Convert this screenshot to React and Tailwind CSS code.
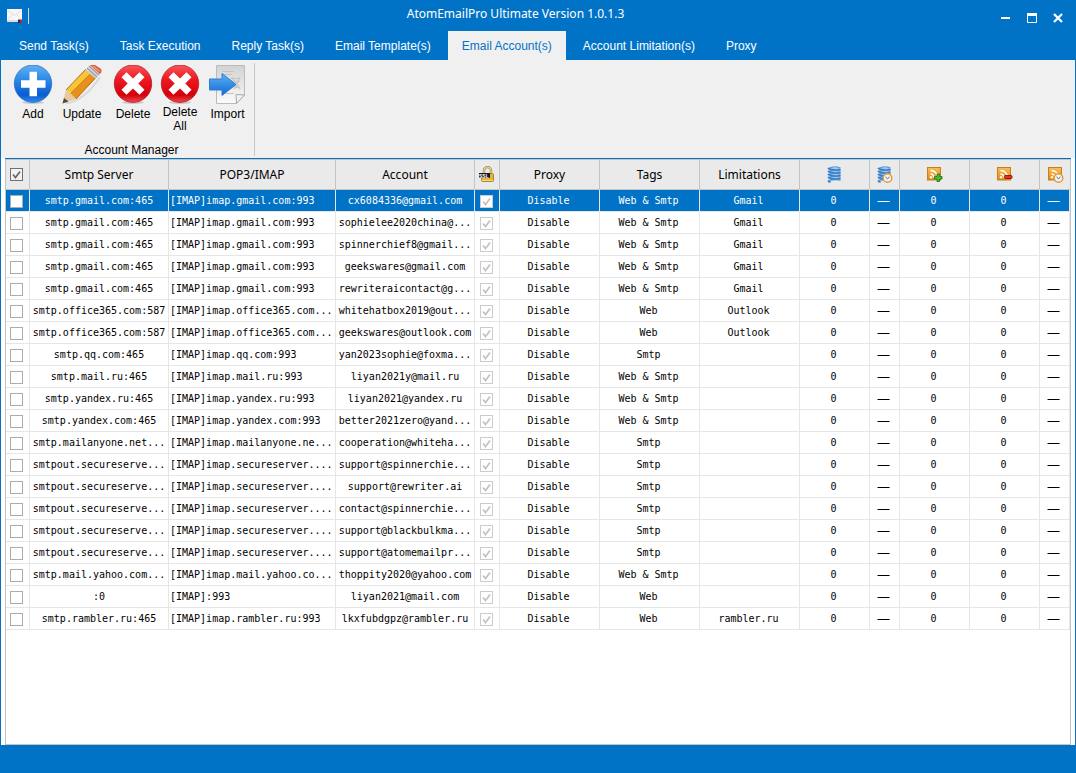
import React, { useState } from "react";

const tabs = [
  "Send Task(s)",
  "Task Execution",
  "Reply Task(s)",
  "Email Template(s)",
  "Email Account(s)",
  "Account Limitation(s)",
  "Proxy",
];

const accounts = [
  ["smtp.gmail.com:465", "[IMAP]imap.gmail.com:993", "cx6084336@gmail.com", "Web & Smtp", "Gmail"],
  ["smtp.gmail.com:465", "[IMAP]imap.gmail.com:993", "sophielee2020china@...", "Web & Smtp", "Gmail"],
  ["smtp.gmail.com:465", "[IMAP]imap.gmail.com:993", "spinnerchief8@gmail...", "Web & Smtp", "Gmail"],
  ["smtp.gmail.com:465", "[IMAP]imap.gmail.com:993", "geekswares@gmail.com", "Web & Smtp", "Gmail"],
  ["smtp.gmail.com:465", "[IMAP]imap.gmail.com:993", "rewriteraicontact@g...", "Web & Smtp", "Gmail"],
  ["smtp.office365.com:587", "[IMAP]imap.office365.com...", "whitehatbox2019@out...", "Web", "Outlook"],
  ["smtp.office365.com:587", "[IMAP]imap.office365.com...", "geekswares@outlook.com", "Web", "Outlook"],
  ["smtp.qq.com:465", "[IMAP]imap.qq.com:993", "yan2023sophie@foxma...", "Smtp", ""],
  ["smtp.mail.ru:465", "[IMAP]imap.mail.ru:993", "liyan2021y@mail.ru", "Web & Smtp", ""],
  ["smtp.yandex.ru:465", "[IMAP]imap.yandex.ru:993", "liyan2021@yandex.ru", "Web & Smtp", ""],
  ["smtp.yandex.com:465", "[IMAP]imap.yandex.com:993", "better2021zero@yand...", "Web & Smtp", ""],
  ["smtp.mailanyone.net...", "[IMAP]imap.mailanyone.ne...", "cooperation@whiteha...", "Smtp", ""],
  ["smtpout.secureserve...", "[IMAP]imap.secureserver....", "support@spinnerchie...", "Smtp", ""],
  ["smtpout.secureserve...", "[IMAP]imap.secureserver....", "support@rewriter.ai", "Smtp", ""],
  ["smtpout.secureserve...", "[IMAP]imap.secureserver....", "contact@spinnerchie...", "Smtp", ""],
  ["smtpout.secureserve...", "[IMAP]imap.secureserver....", "support@blackbulkma...", "Smtp", ""],
  ["smtpout.secureserve...", "[IMAP]imap.secureserver....", "support@atomemailpr...", "Smtp", ""],
  ["smtp.mail.yahoo.com...", "[IMAP]imap.mail.yahoo.co...", "thoppity2020@yahoo.com", "Web & Smtp", ""],
  [":0", "[IMAP]:993", "liyan2021@mail.com", "Web", ""],
  ["smtp.rambler.ru:465", "[IMAP]imap.rambler.ru:993", "lkxfubdgpz@rambler.ru", "Web", "rambler.ru"],
];

const MailIcon = () => (
  <svg width="16" height="16" viewBox="0 0 16 16">
    <rect x="0" y="1" width="15" height="13" fill="#f7f7f7" />
    <rect x="0" y="12" width="15" height="2" fill="#dcdcdc" />
    <path d="M1 2.5 L7.5 7.5 L14 2.5 M1 11 L5.5 6.5 M14 11 L9.5 6.5" fill="none" stroke="#dedede" />
    <rect x="11" y="11.5" width="2" height="3.5" fill="#2a2d50" />
    <rect x="13" y="11.5" width="2" height="3.5" fill="#c22338" />
  </svg>
);

const AddIcon = () => (
  <svg width="40" height="40" viewBox="0 0 40 40">
    <defs>
      <linearGradient id="blueBall" x1="0" y1="0" x2="0" y2="1">
        <stop offset="0" stopColor="#62b0f4" />
        <stop offset="0.45" stopColor="#2484e6" />
        <stop offset="0.8" stopColor="#0b5bd0" />
        <stop offset="1" stopColor="#2f8cf0" />
      </linearGradient>
    </defs>
    <ellipse cx="20" cy="37.5" rx="11" ry="1.5" fill="#c4c8cc" />
    <circle cx="20" cy="18.7" r="18.7" fill="url(#blueBall)" stroke="#2a6fc4" strokeWidth="0.8" />
    <path d="M16.5 6.7h7.5v8.5h8.5v7.5h-8.5v8.5h-7.5v-8.5h-8.5v-7.5h8.5z" fill="#fff" />
  </svg>
);

const PencilIcon = () => (
  <svg width="40" height="40" viewBox="0 0 40 40">
    <path d="M4 38.5 Q22 36 38 12" fill="none" stroke="#d8d8d8" strokeWidth="2" />
    <path d="M4 25 L14 34 L0.5 38.5z" fill="#e8c99a" />
    <path d="M2 33 L6.5 36.5 L0.5 38.5z" fill="#4a4a4a" />
    <path d="M4 25 L24 4 L29 8 L8.5 28.5z" fill="#f7c43c" />
    <path d="M8.5 28.5 L29 8 L34 12.5 L14 34z" fill="#e8901c" />
    <path d="M4 25 L24 4 M14 34 L34 12.5" stroke="#b86f12" fill="none" />
    <path d="M8.5 28.5 L29 8" stroke="#d88612" fill="none" />
    <path d="M23 5 L28 0 L38 9 L33.5 13.5z" fill="#cfcfcf" />
    <path d="M25 3 L35 12 M27 1 L37 10" stroke="#8c8c8c" fill="none" />
    <path d="M28 0 L33 0 L39 4 Q40.5 7 38 9z" fill="#e0563a" />
    <path d="M31 1 L38 6.5" stroke="#f29a80" strokeWidth="1.5" fill="none" />
  </svg>
);

const DeleteIcon = () => (
  <svg width="40" height="40" viewBox="0 0 40 40">
    <defs>
      <linearGradient id="redBall" x1="0" y1="0" x2="0" y2="1">
        <stop offset="0" stopColor="#f7585c" />
        <stop offset="0.35" stopColor="#ee1c24" />
        <stop offset="0.8" stopColor="#d4000c" />
        <stop offset="1" stopColor="#f04a4e" />
      </linearGradient>
    </defs>
    <ellipse cx="20" cy="37.5" rx="11" ry="1.5" fill="#ccc4c4" />
    <circle cx="20" cy="18.7" r="18.7" fill="url(#redBall)" stroke="#b81a20" strokeWidth="0.8" />
    <path
      d="M13.5 7.2l6.5 6.2 6.5-6.2 5 5-6.2 6.3 6.2 6.3-5 5-6.5-6.2-6.5 6.2-5-5 6.2-6.3-6.2-6.3z"
      fill="#fff"
    />
  </svg>
);

const ImportIcon = () => (
  <svg width="40" height="40" viewBox="0 0 40 40">
    <defs>
      <linearGradient id="paper" x1="0" y1="0" x2="0" y2="1">
        <stop offset="0" stopColor="#d2d2d2" />
        <stop offset="1" stopColor="#fbfbfb" />
      </linearGradient>
      <linearGradient id="arrow" x1="0" y1="0" x2="0" y2="1">
        <stop offset="0" stopColor="#5eb3f7" />
        <stop offset="1" stopColor="#1268d0" />
      </linearGradient>
    </defs>
    <path d="M8.5 0.5h28v29.5l-8 8.5h-20z" fill="url(#paper)" stroke="#b9bcbe" />
    <path d="M36.5 30l-8.5-0.5 0.5 9z" fill="#f2f2f2" stroke="#a8a8a8" />
    <path d="M14 6.5h12M14 9.5h10M22 13.5h10M25 16.5h7M26 22.5h6M15 28.5h11" stroke="#c4c4c4" fill="none" />
    <path d="M24 12l8 12M32 12l-6 12" stroke="#cacaca" strokeWidth="2" fill="none" />
    <path d="M1.5 14h12.5V8.5L28 19.5 14 30.5V25H1.5z" fill="url(#arrow)" stroke="#2b7fd4" />
  </svg>
);

const LockIcon = () => (
  <svg width="16" height="17" viewBox="0 0 16 17">
    <path d="M5 8V4.5a3.5 3.5 0 0 1 7 0V8" fill="none" stroke="#a8904e" strokeWidth="2.4" />
    <path d="M5 8V4.5a3.5 3.5 0 0 1 7 0V8" fill="none" stroke="#ecdca4" strokeWidth="1" />
    <rect x="2.5" y="7.5" width="12" height="8" rx="1" fill="#e3b53c" stroke="#b08424" />
    <path d="M3 14.5h11" stroke="#f5dc88" />
    <rect x="0" y="7" width="11" height="5" fill="#111827" />
    <text x="0" y="12" fontSize="5" fontWeight="bold" fill="#fff" fontFamily="Liberation Sans, sans-serif">
      SSL
    </text>
  </svg>
);

const Clock = () => (
  <g>
    <circle cx="11.5" cy="12" r="4.3" fill="#eef3fa" stroke="#e59a2c" strokeWidth="1.4" />
    <path d="M9.5 11l2 1.7 2-1.7" fill="none" stroke="#56627a" />
  </g>
);

const CoilIcon = ({ clock }) => (
  <svg width="17" height="17" viewBox="0 0 17 17">
    <path d="M3 2h10.5v12L4 15.5z" fill="#a4c9ee" />
    <path
      d="M2.5 2.5Q8 -0.5 14 2M2.5 5.5Q8 3.5 14 5M2.5 8.5Q8 6.5 14 8M2.5 11.5Q8 9.5 14 11M2.5 14.5Q8 12.5 14 14"
      fill="none"
      stroke="#5a9bdc"
      strokeWidth="1.4"
      strokeLinecap="round"
    />
    <path
      d="M2.5 2.5Q7 5 14 3.5M2.5 5.5Q7 8 14 6.5M2.5 8.5Q7 11 14 9.5M2.5 11.5Q7 14 14 12.5M2.5 15.5L4 16"
      fill="none"
      stroke="#3a7fc6"
      strokeWidth="1.6"
      strokeLinecap="round"
    />
    {clock && <Clock />}
  </svg>
);

const FeedIcon = ({ badge }) => (
  <svg width="17" height="17" viewBox="0 0 17 17">
    <defs>
      <linearGradient id="feed" x1="0" y1="0" x2="0" y2="1">
        <stop offset="0" stopColor="#f6bf5c" />
        <stop offset="1" stopColor="#e08a14" />
      </linearGradient>
    </defs>
    <rect x="1.5" y="1.5" width="13" height="12.5" fill="url(#feed)" stroke="#c9801c" />
    <path d="M4.5 4.5a7 7 0 0 1 7 7M4.5 8a3.5 3.5 0 0 1 3.5 3.5" fill="none" stroke="#fff" strokeWidth="1.6" />
    <circle cx="5" cy="11.3" r="1.2" fill="#fff" />
    {badge === "plus" && (
      <path d="M11 8h2.5v2.5h2.5v2.5h-2.5v2.5h-2.5v-2.5h-2.5v-2.5h2.5z" fill="#4cb83a" stroke="#26861d" />
    )}
    {badge === "minus" && <rect x="8.5" y="9.5" width="7.5" height="3" rx="1" fill="#dc3424" stroke="#9c140c" />}
    {badge === "clock" && <Clock />}
  </svg>
);

const Tick = ({ className }) => (
  <svg width="13" height="13" viewBox="0 0 13 13" className={`pointer-events-none [grid-area:1/1] ${className}`}>
    <path d="M3 6.5l2.5 3 4.5-6" fill="none" stroke="currentColor" strokeWidth="1.8" />
  </svg>
);

const CheckBox = ({ label, className, tickClass, ...props }) => (
  <label className="grid place-items-center">
    <input
      type="checkbox"
      aria-label={label}
      className={`peer size-[13px] appearance-none border [grid-area:1/1] ${className}`}
      {...props}
    />
    <Tick className={`hidden peer-checked:block ${tickClass}`} />
  </label>
);

const tools = [
  { name: "Add", icon: <AddIcon />, width: "w-12" },
  { name: "Update", icon: <PencilIcon />, width: "w-[50px]" },
  { name: "Delete", icon: <DeleteIcon />, width: "w-[52px]" },
  { name: "Delete All", icon: <DeleteIcon />, width: "w-[42px]", wrap: true },
  { name: "Import", icon: <ImportIcon />, width: "w-[53px]" },
];

const columns = [
  { name: "Smtp Server", width: "w-[139px]" },
  { name: "POP3/IMAP", width: "w-[167px]" },
  { name: "Account", width: "w-[139px]" },
  { name: "SSL", width: "w-[25px]", icon: <LockIcon /> },
  { name: "Proxy", width: "w-[100px]" },
  { name: "Tags", width: "w-[100px]" },
  { name: "Limitations", width: "w-[100px]" },
  { name: "Total", width: "w-[70px]", icon: <CoilIcon /> },
  { name: "Total time", width: "w-[30px]", icon: <CoilIcon clock /> },
  { name: "Success", width: "w-[70px]", icon: <FeedIcon badge="plus" /> },
  { name: "Failed", width: "w-[70px]", icon: <FeedIcon badge="minus" /> },
  { name: "Last time", width: "w-[30px]", icon: <FeedIcon badge="clock" /> },
];

const Dash = () => <span className="block font-['Liberation_Sans',sans-serif] text-xs leading-4">—</span>;

const App = () => {
  const [tab, setTab] = useState("Email Account(s)");
  const [selected, setSelected] = useState(0);

  return (
    <div className="flex min-h-screen flex-col bg-[#0173c7] font-['Liberation_Sans',Arial,sans-serif] text-xs text-black">
      <header className="flex h-[31px] items-center text-white">
        <div className="flex w-[30px] items-center gap-[5px] pl-[7px]">
          <MailIcon />
          <span className="h-4 w-px shrink-0 bg-[#c8d8e8]" />
        </div>
        <h1 className="flex-1 pb-1 text-center font-['Noto_Sans',sans-serif] text-xs">
          AtomEmailPro Ultimate Version 1.0.1.3
        </h1>
        <div className="flex w-[75px] items-center gap-4 pt-1">
          <button aria-label="Minimize">
            <svg width="10" height="10" viewBox="0 0 10 10">
              <rect y="4" width="9" height="2" fill="#fff" />
            </svg>
          </button>
          <button aria-label="Maximize">
            <svg width="10" height="10" viewBox="0 0 10 10">
              <path d="M0.5 0.5h9v9h-9z" fill="none" stroke="#fff" />
              <rect width="10" height="3" fill="#fff" />
            </svg>
          </button>
          <button aria-label="Close">
            <svg width="10" height="10" viewBox="0 0 10 10">
              <path d="M1 1l8 8M9 1l-8 8" stroke="#fff" strokeWidth="2.2" />
            </svg>
          </button>
        </div>
      </header>

      <nav className="flex h-[29px] gap-[3px] pl-[5px]">
        {tabs.map((t) => (
          <button
            key={t}
            onClick={() => setTab(t)}
            className={`px-[14px] whitespace-nowrap ${t === tab ? "bg-[#f0f0f0] text-[#0173c7]" : "text-white"}`}
          >
            {t}
          </button>
        ))}
      </nav>

      <main className="mx-px flex flex-1 flex-col bg-white">
        <section className="flex h-[98px] bg-[#f0f0f0] pb-[2px] pt-[3px]">
          <div className="flex flex-col border-r border-[#c8c8c8] pl-2 pt-[2px]">
            <div className="flex flex-1 items-start">
              {tools.map((tool) => (
                <button key={tool.name} className={`flex flex-col items-center leading-[14px] ${tool.width}`}>
                  {tool.icon}
                  <span className={tool.wrap ? "" : "pt-[2px]"}>{tool.name}</span>
                </button>
              ))}
            </div>
            <p className="text-center leading-3">Account Manager</p>
          </div>
        </section>

        <section className="mx-1 flex flex-1 flex-col border-t border-[#0173c7]">
          <div className="flex-1 border border-[#c4c4c4]">
            <table className="w-full table-fixed border-separate border-spacing-0 text-center">
              <thead className="bg-[#eaeaea] font-['Noto_Sans',sans-serif] text-xs">
                <tr className="h-[30px]">
                  <th className="w-6 border-b border-r border-[#c4c4c4] p-0 pr-[2px]">
                    <CheckBox label="Select all" defaultChecked className="border-[#707070] bg-[#f2f2f2]" tickClass="text-[#6b6b6b]" />
                  </th>
                  {columns.map((col) => (
                    <th key={col.name} className={`border-b border-r border-[#c4c4c4] p-0 font-normal last:border-r-0 ${col.width}`}>
                      {col.icon ? <span className="flex justify-center">{col.icon}</span> : col.name}
                    </th>
                  ))}
                </tr>
              </thead>
              <tbody className="font-['DejaVu_Sans_Mono',monospace] text-[10px] leading-4">
                {accounts.map(([smtp, imap, account, tags, limit], i) => (
                  <tr
                    key={i}
                    onClick={() => setSelected(i)}
                    className={`h-[22px] *:border-b *:border-r *:border-[#e6e6e6] *:pt-px *:pr-[2px] *:whitespace-nowrap ${
                      i === selected ? "bg-[#0173c7] text-white" : ""
                    }`}
                  >
                    <td>
                      <CheckBox label={`Select ${account}`} className="border-[#ababab] bg-white" tickClass="text-[#555555]" />
                    </td>
                    <td className="pl-[2px]">{smtp}</td>
                    <td className="text-left indent-px">{imap}</td>
                    <td className="pl-[2px]">{account}</td>
                    <td>
                      <CheckBox label={`SSL ${account}`} defaultChecked disabled className="border-[#cccccc] bg-white" tickClass="text-[#c4c4c4]" />
                    </td>
                    <td>Disable</td>
                    <td>{tags}</td>
                    <td>{limit}</td>
                    <td>0</td>
                    <td><Dash /></td>
                    <td>0</td>
                    <td>0</td>
                    <td><Dash /></td>
                  </tr>
                ))}
              </tbody>
            </table>
          </div>
        </section>
      </main>

      <footer className="h-7" />
    </div>
  );
};

export default App;
